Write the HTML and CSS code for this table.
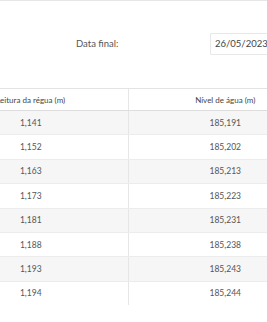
FILE: index.html
```html
<!DOCTYPE html>
<html lang="pt">
<head>
<meta charset="utf-8">
<link rel="stylesheet" href="styles.css">
</head>
<body>
<div class="page">
  <div class="filters">
    <span class="label">Data final:</span>
    <div class="date-input">26/05/2023</div>
  </div>
  <div class="table-wrap">
    <table class="data">
      <thead>
        <tr><th>Leitura da régua (m)</th><th>Nível de água (m)</th></tr>
      </thead>
      <tbody>
        <tr><td>1,141</td><td>185,191</td></tr>
        <tr><td>1,152</td><td>185,202</td></tr>
        <tr><td>1,163</td><td>185,213</td></tr>
        <tr><td>1,173</td><td>185,223</td></tr>
        <tr><td>1,181</td><td>185,231</td></tr>
        <tr><td>1,188</td><td>185,238</td></tr>
        <tr><td>1,193</td><td>185,243</td></tr>
        <tr><td>1,194</td><td>185,244</td></tr>
      </tbody>
    </table>
  </div>
</div>
</body>
</html>
```
FILE: styles.css
```css
html, body {
  margin: 0;
  padding: 0;
  overflow: hidden;
  background: #fff;
}
body {
  font-family: "Lato", "Open Sans", sans-serif;
  color: #555;
  width: 267px;
  height: 322px;
}
.page {
  border-top: 1px solid #e6e6e6;
}
.filters {
  height: 88px;
  display: flex;
  align-items: center;
  border-bottom: 1px solid #e3e3e3;
  box-sizing: border-box;
  padding-bottom: 2px;
}
.label {
  font-size: 9.5px;
  color: #555;
  margin-left: 76px;
  width: 134px;
  flex: none;
}
.date-input {
  flex: none;
  box-sizing: border-box;
  height: 22px;
  width: 80px;
  border: 1px solid #e8e8e8;
  border-right: none;
  border-radius: 2px 0 0 2px;
  padding: 0 0 0 4px;
  font-size: 9.5px;
  line-height: 20px;
  color: #444;
}
.table-wrap {
  margin-left: -66px;
  width: 388px;
}
.data {
  width: 388px;
  border-collapse: collapse;
  table-layout: fixed;
}
.data th, .data td {
  width: 50%;
  text-align: center;
  border-right: 1px solid #e6e6e6;
  padding: 0;
}
.data th:last-child, .data td:last-child {
  border-right: none;
}
.data th {
  font-weight: normal;
  font-size: 8px;
  color: #444;
  height: 21px;
  border-bottom: 1px solid #dedede;
}
.data td {
  font-size: 8.5px;
  height: 23.4px;
  color: #555;
  border-bottom: 1px solid #ececec;
}
.data tbody tr:nth-child(odd) td {
  background: #f6f6f6;
}
.data tbody tr:last-child td {
  border-bottom: none;
}
```
